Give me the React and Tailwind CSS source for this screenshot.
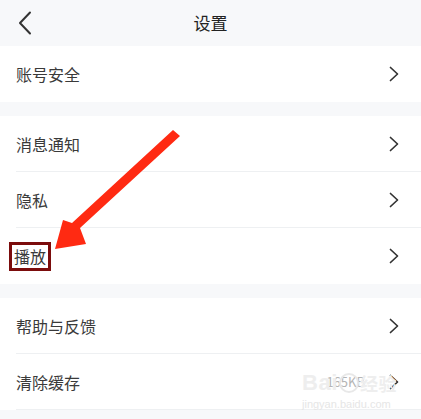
import React from "react";

const Chevron = () => (
    <svg width="10" height="16" viewBox="0 0 10 16" className="shrink-0">
        <polyline points="1.5,1.5 8.5,8 1.5,14.5" fill="none" stroke="#333" strokeWidth="1.7" strokeLinecap="round" strokeLinejoin="round" />
    </svg>
);

const Row = ({label, extra, last, boxed}) => (
    <div className={"h-[56px] ml-4 flex items-center pr-[22px] " + (last ? "" : "border-b border-[#eef0f2]")}>
        <span className="flex-1 text-[16px] text-[#3a3a3a]">
            {boxed ? (
                <span className="-ml-[7px] inline-block border-[3px] border-[#7b0c0c] px-[2px] leading-[23px]">{label}</span>
            ) : label}
        </span>
        {extra && <span className="text-[13px] text-[#b5b5b5] mr-[24px]">{extra}</span>}
        <Chevron />
    </div>
);

const App = () => {
    return (
        <div className="relative w-[421px] h-[419px] overflow-hidden bg-[#f7f8fa]" style={{fontFamily: '"Noto Sans CJK SC", "Noto Sans", sans-serif'}}>
            <div className="h-[46px] flex items-center relative">
                <svg width="14" height="24" viewBox="0 0 14 24" className="ml-[18px]">
                    <polyline points="12,1.5 2,12 12,22.5" fill="none" stroke="#333" strokeWidth="2" strokeLinecap="round" strokeLinejoin="round" />
                </svg>
                <div className="absolute inset-0 flex items-center justify-center text-[17px] text-[#222]">设置</div>
            </div>

            <div className="bg-white">
                <Row label="账号安全" last />
            </div>

            <div className="bg-white mt-[14px]">
                <Row label="消息通知" />
                <Row label="隐私" />
                <Row label="播放" last boxed />
            </div>

            <div className="bg-white mt-[14px]">
                <Row label="帮助与反馈" />
                <Row label="清除缓存" extra="165KB" />
            </div>

            {/* watermark */}
            <div className="absolute left-[302px] top-[372px] pointer-events-none" style={{fontFamily: '"Liberation Sans", sans-serif'}}>
                <div className="flex items-center text-[22px] font-bold text-[#eeeeee] leading-none tracking-wide">
                    <span>Bai</span>
                    <span className="w-[20px] h-[20px] rounded-full border-2 border-[#e8e8e8] mx-[1px]"></span>
                    <span className="text-[18px]" style={{fontFamily: '"Noto Sans CJK SC", sans-serif'}}>经验</span>
                </div>
                <div className="text-[11px] text-[#e6e6e6] mt-[2px]">jingyan.baidu.com</div>
            </div>

            {/* red arrow */}
            <svg className="absolute left-0 top-0 pointer-events-none" width="421" height="419">
                <path d="M173,130 L180,136 L80,228 L86,244 L55,249 L63,220 L72,223 Z" fill="#ff2a12" />
            </svg>
        </div>
    );
};

export default App;
